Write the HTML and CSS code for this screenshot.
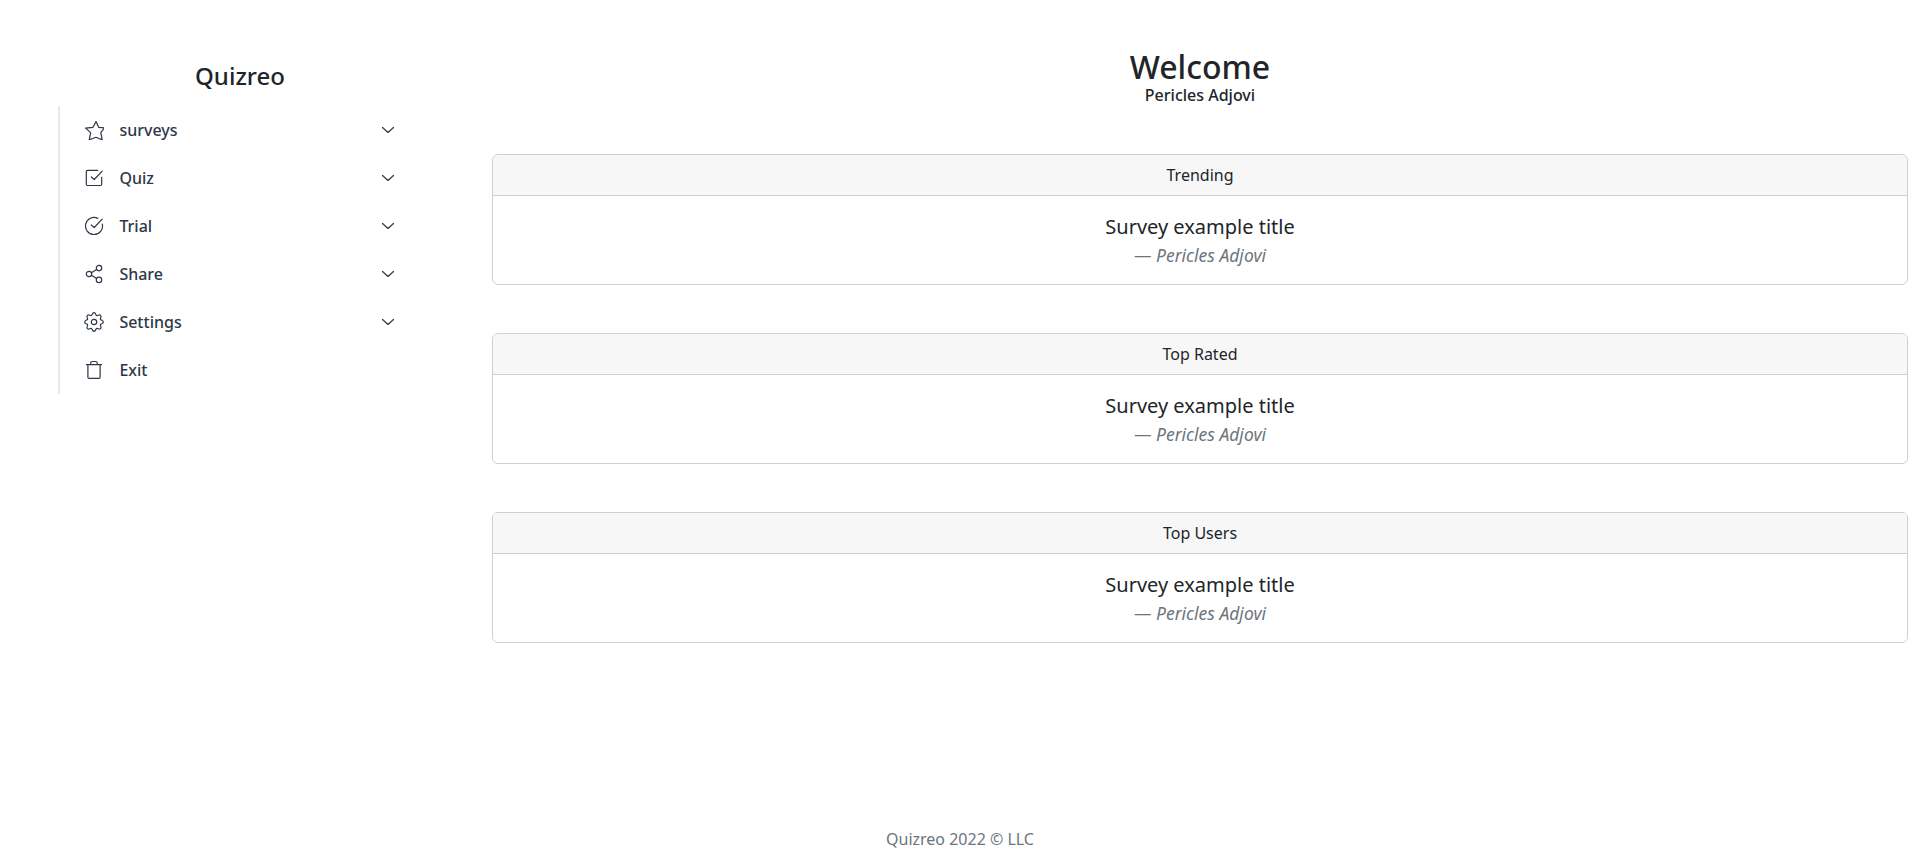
FILE: index.html
```html
<!DOCTYPE html>
<html lang="en">
<head>
<meta charset="utf-8">
<title>Quizreo</title>
<link rel="stylesheet" href="styles.css">
</head>
<body>
<div class="layout">
  <aside class="sidebar">
    <h4 class="brand">Quizreo</h4>
    <nav class="menu">
      <a class="item"><svg class="icon" viewBox="0 0 20 20"><path d="M12 1.6 14.7 7.3 20.4 8 16.8 12.6 18.2 19.8 12 17.3 5.2 19.8 6.7 12.6 1.6 8.1 9 7.3Z"/></svg><span class="label">surveys</span><svg class="chevron" viewBox="0 0 12 6"><path d="M.5.5 6 5.5 11.5.5"/></svg></a>
      <a class="item"><svg class="icon" viewBox="0 0 20 20"><path d="M13.7 2.3H3.5Q2.3 2.3 2.3 3.5V16.3Q2.3 17.5 3.5 17.5H16.5Q17.7 17.5 17.7 16.3V9.3M7.3 9 10.2 11.5 18.2 3.1"/></svg><span class="label">Quiz</span><svg class="chevron" viewBox="0 0 12 6"><path d="M.5.5 6 5.5 11.5.5"/></svg></a>
      <a class="item"><svg class="icon" viewBox="0 0 20 20"><path d="M13.8 2.4A8.5 8.5 0 1 0 18.3 8.1M7.3 9 10.2 11.5 18.2 3.1"/></svg><span class="label">Trial</span><svg class="chevron" viewBox="0 0 12 6"><path d="M.5.5 6 5.5 11.5.5"/></svg></a>
      <a class="item"><svg class="icon" viewBox="0 0 20 20"><circle cx="5" cy="10" r="2.7"/><circle cx="15" cy="4.1" r="2.7"/><circle cx="15" cy="15.9" r="2.7"/><path d="M7.4 8.7 12.6 5.5M7.4 11.3 12.6 14.5"/></svg><span class="label">Share</span><svg class="chevron" viewBox="0 0 12 6"><path d="M.5.5 6 5.5 11.5.5"/></svg></a>
      <a class="item"><svg class="icon" viewBox="0 0 20 20"><defs><path id="tooth" d="M7.32 3.53C8.7 3 7.9.7 10 .7S11.3 3 12.68 3.53"/></defs><circle cx="10" cy="10" r="2.7"/><use href="#tooth"/><use href="#tooth" transform="rotate(45 10 10)"/><use href="#tooth" transform="rotate(90 10 10)"/><use href="#tooth" transform="rotate(135 10 10)"/><use href="#tooth" transform="rotate(180 10 10)"/><use href="#tooth" transform="rotate(225 10 10)"/><use href="#tooth" transform="rotate(270 10 10)"/><use href="#tooth" transform="rotate(315 10 10)"/></svg><span class="label">Settings</span><svg class="chevron" viewBox="0 0 12 6"><path d="M.5.5 6 5.5 11.5.5"/></svg></a>
      <a class="item"><svg class="icon" viewBox="0 0 20 20"><path d="M2.5 4.7H17.5M3.9 4.7V17.2Q3.9 18.4 5.1 18.4H14.9Q16.1 18.4 16.1 17.2V4.7M6.7 4.7V3.3Q6.7 1.5 8.5 1.5H11.5Q13.3 1.5 13.3 3.3V4.7"/></svg><span class="label">Exit</span></a>
    </nav>
  </aside>
  <main class="content">
    <header class="welcome">
      <h2 class="title">Welcome</h2>
      <p class="user">Pericles Adjovi</p>
    </header>
    <section class="card">
      <div class="card-header">Trending</div>
      <div class="card-body"><p class="survey">Survey example title</p><p class="author">— <cite>Pericles Adjovi</cite></p></div>
    </section>
    <section class="card">
      <div class="card-header">Top Rated</div>
      <div class="card-body"><p class="survey">Survey example title</p><p class="author">— <cite>Pericles Adjovi</cite></p></div>
    </section>
    <section class="card">
      <div class="card-header">Top Users</div>
      <div class="card-body"><p class="survey">Survey example title</p><p class="author">— <cite>Pericles Adjovi</cite></p></div>
    </section>
  </main>
</div>
<footer class="footer">Quizreo 2022 © LLC</footer>
</body>
</html>
```
FILE: styles.css
```css
* { box-sizing: border-box; }
body {
  margin: 0;
  height: 867px;
  display: flex;
  flex-direction: column;
  background: #fff;
  color: #212529;
  font: 400 16px/24px "Noto Sans", sans-serif;
}
h2, h4, p { margin: 0; }
.layout { display: grid; grid-template-columns: 480px 1fr; flex: 1; }
.sidebar { padding: 61px 58px 0; }
.brand { font-size: 24px; font-weight: 500; line-height: 29px; text-align: center; }
.menu { margin-top: 16px; border-left: 2px solid #e2e8f0; }
.item {
  display: flex;
  align-items: center;
  height: 48px;
  padding: 0 28px 0 24px;
  color: #2d3748;
  font-weight: 500;
}
.icon, .chevron { fill: none; stroke: #2d3748; stroke-width: 1.2; stroke-linecap: round; stroke-linejoin: round; flex: none; }
.icon { width: 20px; height: 20px; margin-right: 15.4px; }
.chevron { width: 12px; height: 6px; }
.label { flex: 1; }
.content { padding: 48px 12px 0; text-align: center; }
.welcome { height: 106px; }
.title { font-size: 32px; font-weight: 500; line-height: 38px; }
.user { font-weight: 500; line-height: 19px; }
.card { border: 1px solid #cfcfcf; border-radius: 6px; margin-bottom: 48px; overflow: hidden; }
.card-header { padding: 8px 16px; background: #f7f7f7; border-bottom: 1px solid #cfcfcf; }
.card-body { padding: 16px; }
.survey { font-size: 20px; line-height: 30px; }
.author { font-size: 17.5px; line-height: 26px; color: #6c757d; }
.footer { height: 40px; color: #6c757d; text-align: center; }
```
